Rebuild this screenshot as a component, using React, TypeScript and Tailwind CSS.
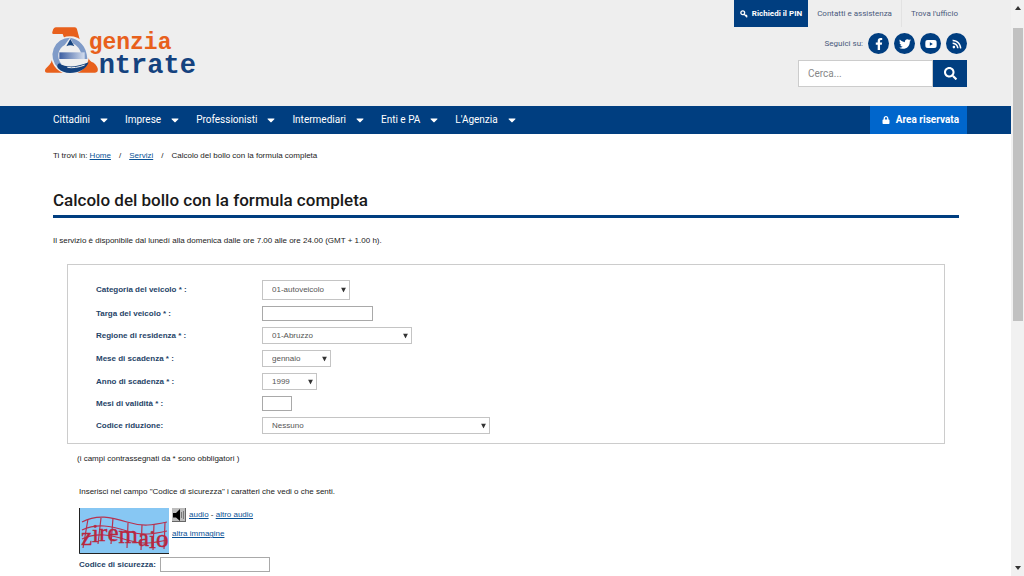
import React from 'react';
import { FaCaretDown, FaFacebookF, FaLock, FaRss, FaSearch, FaTwitter, FaYoutube } from 'react-icons/fa';
import { clsx } from 'clsx';

const titleFont = "font-['Roboto','Noto_Sans',sans-serif]";
const bodyFont = "font-['Liberation_Sans',Arial,sans-serif]";

const menuItems = ['Cittadini', 'Imprese', 'Professionisti', 'Intermediari', 'Enti e PA', "L'Agenzia"];

const socials = [
  { name: 'Facebook', icon: <FaFacebookF className="w-3 h-3" /> },
  { name: 'Twitter', icon: <FaTwitter className="w-3 h-3" /> },
  { name: 'YouTube', icon: <FaYoutube className="w-3 h-3" /> },
  { name: 'RSS', icon: <FaRss className="w-2.5 h-2.5" /> },
];

interface Field {
  id: string;
  label: string;
  width: string;
  height: string;
  options?: string[];
}

const fields: Field[] = [
  { id: 'categoria', label: 'Categoria del veicolo * :', width: 'w-[88px]', height: 'h-5', options: ['01-autoveicolo', '02-rimorchio', '03-motoveicolo'] },
  { id: 'targa', label: 'Targa del veicolo * :', width: 'w-[111px]', height: 'h-[15px]' },
  { id: 'regione', label: 'Regione di residenza * :', width: 'w-[150px]', height: 'h-[17px]', options: ['01-Abruzzo', '02-Basilicata', '04-Calabria'] },
  { id: 'mese', label: 'Mese di scadenza * :', width: 'w-[69px]', height: 'h-[17px]', options: ['gennaio', 'febbraio', 'marzo'] },
  { id: 'anno', label: 'Anno di scadenza * :', width: 'w-[55px]', height: 'h-[17px]', options: ['1999', '2000', '2001'] },
  { id: 'validita', label: 'Mesi di validità * :', width: 'w-[30px]', height: 'h-[15px]' },
  { id: 'riduzione', label: 'Codice riduzione:', width: 'w-[228px]', height: 'h-[17px]', options: ['Nessuno'] },
];

const Logo: React.FC = () => (
  <svg viewBox="42 30 471 171" className="w-[157px] h-[57px]" role="img" aria-label="Agenzia Entrate">
    <defs>
      <linearGradient id="bar" x1="0" x2="1">
        <stop offset="0" stopColor="#3d5fa2" />
        <stop offset="1" stopColor="#d3ddee" />
      </linearGradient>
    </defs>
    <path d="M78 37h56c4 0 6 2 7 6l8 30H104l-6-16H70c-4 0-4-5-2-9 2-7 5-11 10-11z" fill="#e8601c" />
    <path d="M66 134c-3 12-10 18-17 25-6 6-5 14 2 14h54z" fill="#e8601c" />
    <path d="M164 92c4 22 9 38 20 48 10 3 17 12 19 20 2 8-1 13-8 13h-56z" fill="#e8601c" />
    <circle cx="120" cy="121" r="57" fill="#efefef" />
    <path d="M120 68a52 52 0 0 0-36 90l10-12a36 36 0 0 1 10-56l16-22z" fill="#7f9bc8" />
    <path d="M120 68c26 4 50 24 52 64h-16c0-22-10-38-26-46z" fill="#7f9bc8" />
    <path d="M121 72l12 22c-8-4-16-4-24 0z" fill="#14427e" />
    <path d="M88 112h76v20H88z" fill="url(#bar)" />
    <path d="M88 145c20 14 52 12 88-3-8 22-30 32-56 32-14 0-26-4-36-14-4-6-2-13 4-15z" fill="#14427e" />
    <path d="M112 157c16 3 34 0 52-7" stroke="#efefef" strokeWidth="3" fill="none" />
    <text x="176" y="103" className="font-['Liberation_Mono','Courier_New',monospace] font-bold text-[69px]" fill="#e8601c">genzia</text>
    <text x="206" y="173" className="font-['Liberation_Mono','Courier_New',monospace] font-bold text-[81px]" fill="#14427e">ntrate</text>
  </svg>
);

const KeyIcon: React.FC = () => (
  <svg viewBox="0 0 16 16" className="w-2 h-2" fill="none" stroke="currentColor" strokeWidth="2.6" aria-hidden="true">
    <circle cx="5.5" cy="5.5" r="3.8" />
    <path d="M8.5 8.5l6 6M14 10l-3 3" />
  </svg>
);

const AudioIcon: React.FC = () => (
  <svg viewBox="0 0 14 14" className="w-3.5 h-3.5" role="img" aria-label="audio">
    <path d="M0 0h14v14H0z" fill="#bdbdbd" />
    <path d="M1 5h3l4-4v12L4 9.500H1z" fill="#000" />
    <path d="M9.500 4v6M11.500 3v8" stroke="#777" fill="none" />
    <path d="M0 13.500h14M13.500 0v14" stroke="#666" />
  </svg>
);

// each letter sits at its own height along the wave
const Captcha: React.FC = () => (
  <svg viewBox="0 0 90 46" className="w-[90px] h-[46px]" role="img" aria-label="Codice di sicurezza">
    <path d="M0 0h90v46H0z" fill="#87c7f3" />
    <path d="M.5 0v45.500H90" stroke="#222" fill="none" />
    <g stroke="#b8324f" strokeWidth="1.200" fill="none">
      <path d="M3 14C18 6 32 9 48 14s26 3 40 0" />
      <path d="M3 22C18 15 32 18 48 23s26 3 40 0" />
      <path d="M3 31C18 24 32 27 48 32s26 3 40 0" />
      <path d="M9 11L4 40M22 10l-3 26M34 10l-2 26M49 15l-1 25M63 17l-1 25M75 16l-1 26M86 14l-1 27" />
    </g>
    <text
      x="2"
      y="37 34 33 33 35 38 40 39"
      className="font-['Liberation_Serif',serif] text-[25px]"
      fill="#b8273f"
      stroke="#b8273f"
      strokeWidth=".4"
    >
      ziremaio
    </text>
  </svg>
);

const FormField: React.FC<{ field: Field }> = ({ field }) => (
  <div className="flex items-center">
    <label htmlFor={field.id} className="w-[166px] font-bold text-[#1f4468]">{field.label}</label>
    {field.options ? (
      <div className={clsx('relative', field.width)}>
        <select
          id={field.id}
          className={clsx('block w-full appearance-none border border-[#c4c4c4] bg-white pl-[9px] text-[#555]', field.height)}
        >
          {field.options.map(o => <option key={o}>{o}</option>)}
        </select>
        <svg viewBox="0 0 5 5" className="pointer-events-none absolute right-1 top-1/2 w-[5px] h-[5px] -translate-y-1/2" aria-hidden="true">
          <path d="M0 0h5L2.500 5z" fill="#333" />
        </svg>
      </div>
    ) : (
      <input id={field.id} type="text" className={clsx('border border-[#a9a9a9] bg-white px-1', field.width, field.height)} />
    )}
  </div>
);

const Header: React.FC = () => (
  <header className={clsx('flex justify-between bg-[#eee] px-11 pb-[19px] text-[8px] text-[#4a5a7c]', titleFont)}>
    <a href="#" className="mt-[25px] self-start"><Logo /></a>
    <div className="flex flex-col items-end gap-1.5">
      <div className="flex h-[27px] items-center">
        <a href="#" className="flex h-full items-center gap-1 bg-[#003e80] px-1.5 font-bold text-white">
          <KeyIcon />
          Richiedi il PIN
        </a>
        <a href="#" className="flex h-full items-center border-r border-[#e2e2e2] px-[9px]">Contatti e assistenza</a>
        <a href="#" className="px-[9px]">Trova l'ufficio</a>
      </div>
      <div className="flex items-center gap-[5px]">
        <span>Seguici su:</span>
        {socials.map(s => (
          <a key={s.name} href="#" aria-label={s.name} className="flex h-[21px] w-[21px] items-center justify-center rounded-full bg-[#003e80] text-white">
            {s.icon}
          </a>
        ))}
      </div>
      <form className="flex h-[27px]">
        <input type="search" aria-label="Cerca" placeholder="Cerca..." className="w-[135px] border border-[#ccc] bg-white px-[9px] text-[10px] placeholder:text-[#888]" />
        <button type="button" aria-label="Cerca" className="flex w-[34px] items-center justify-center bg-[#003e80] text-white">
          <FaSearch className="h-[13px] w-[13px]" />
        </button>
      </form>
    </div>
  </header>
);

const Navbar: React.FC = () => (
  <nav className={clsx('flex h-7 items-center justify-between bg-[#003e80] px-11 text-[10px] text-white', titleFont)}>
    <div className="flex gap-[15px] pl-[9px]">
      {menuItems.map(item => (
        <button key={item} type="button" className="flex items-center gap-2">
          {item}
          <FaCaretDown className="h-3 w-3" />
        </button>
      ))}
    </div>
    <a href="#" className="flex h-full items-center gap-1.5 bg-[#06c] pr-2 pl-3 font-bold">
      <FaLock className="h-2 w-2" />
      Area riservata
    </a>
  </nav>
);

const Scrollbar: React.FC = () => (
  <div className="sticky top-0 flex h-screen w-[13px] shrink-0 flex-col items-center justify-between bg-[#f1f1f1] py-1.5" aria-hidden="true">
    <svg viewBox="0 0 6 4" className="h-1 w-1.5"><path d="M3 0l3 4H0z" fill="#333" /></svg>
    <div className="mt-[18px] mb-auto h-[52%] w-2.5 bg-[#c1c1c1]" />
    <svg viewBox="0 0 6 4" className="h-1 w-1.5"><path d="M0 0h6L3 4z" fill="#333" /></svg>
  </div>
);

const linkClass = 'text-[#0a5296] underline';

const App: React.FC = () => {
  return (
    <div className={clsx('flex min-h-screen bg-white text-[8px] leading-3 text-[#222]', bodyFont)}>
      <div className="min-w-0 flex-1">
        <Header />
        <Navbar />
        <main className="pl-[53px] pr-[52px]">
          <div className="flex gap-2 pt-4">
            <span>Ti trovi in: <a href="#" className={linkClass}>Home</a></span>
            <span>/</span>
            <a href="#" className={linkClass}>Servizi</a>
            <span>/</span>
            <span>Calcolo del bollo con la formula completa</span>
          </div>

          <h1 className={clsx('mt-[26px] border-b-[3px] border-[#003e80] pb-[3px] text-[17px] leading-6 font-medium text-[#1a1a1a]', titleFont)}>
            Calcolo del bollo con la formula completa
          </h1>
          <p className="mt-[17px]">Il servizio è disponibile dal lunedí alla domenica dalle ore 7.00 alle ore 24.00 (GMT + 1.00 h).</p>

          <form className="mt-[17px] px-3.5">
            <div className="flex flex-col gap-1.5 border border-[#ccc] pt-[15px] pr-4 pb-[9px] pl-7">
              {fields.map(f => <FormField key={f.id} field={f} />)}
            </div>
            <p className="mt-[9px] px-2.5">(i campi contrassegnati da * sono obbligatori )</p>

            <div className="mt-[21px] px-3">
              <p>Inserisci nel campo "Codice di sicurezza" i caratteri che vedi o che senti.</p>
              <div className="mt-2.5 flex gap-[3px]">
                <Captcha />
                <div className="flex flex-col gap-1.5">
                  <div className="flex items-center gap-[3px]">
                    <AudioIcon />
                    <span>
                      <a href="#" className={linkClass}>audio</a> - <a href="#" className={linkClass}>altro audio</a>
                    </span>
                  </div>
                  <a href="#" className={linkClass}>altra immagine</a>
                </div>
              </div>
              <div className="mt-[3px] flex items-center gap-1">
                <label htmlFor="codice" className="font-bold text-[#1f4468]">Codice di sicurezza:</label>
                <input id="codice" type="text" className="h-[15px] w-[110px] border border-[#a9a9a9] bg-white px-1" />
              </div>
            </div>
          </form>
        </main>
      </div>
      <Scrollbar />
    </div>
  );
};

export default App;
